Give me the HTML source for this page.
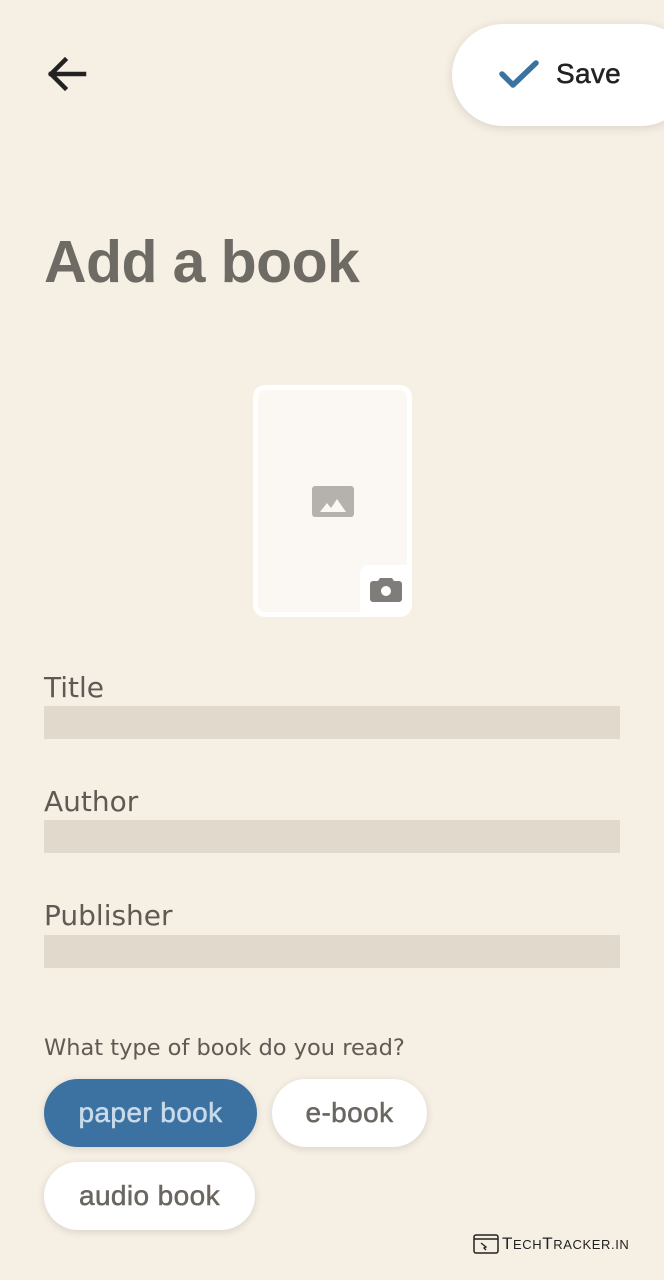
<!DOCTYPE html>
<html><head><meta charset="utf-8"><style>
*{margin:0;padding:0;box-sizing:border-box}
body{width:664px;height:1280px;background:#f6efe4;font-family:"Liberation Sans",sans-serif;position:relative;overflow:hidden}
.abs{position:absolute}
.save{left:452px;top:24px;width:240px;height:102px;background:#fff;border-radius:51px;box-shadow:0 2px 10px rgba(0,0,0,.12)}
.save span{position:absolute;left:104px;top:34px;font-size:28px;color:#222;letter-spacing:0.3px;-webkit-text-stroke:0.5px #222}
h1{position:absolute;left:44px;top:228px;font-size:59px;font-weight:bold;color:#6e6a64;letter-spacing:-0.6px}
.cover{left:253px;top:385px;width:159px;height:232px;background:#fbf7f2;border:5px solid #fff;border-radius:12px}
.lbl{position:absolute;left:44px;font-size:28px;color:#5f5a54;font-family:"DejaVu Sans",sans-serif}
.fld{position:absolute;left:44px;width:576px;height:33px;background:#e2d9cd}
.chip{position:absolute;height:68px;border-radius:34px;background:#fff;font-size:28px;color:#6a6660;text-align:center;line-height:68px;box-shadow:0 2px 8px rgba(0,0,0,.12);letter-spacing:0.4px;-webkit-text-stroke:0.5px currentColor}
</style></head><body>
<svg class="abs" style="left:44px;top:54px" width="44" height="40" viewBox="0 0 44 40"><path d="M40 20H7M21 6L7 20L21 34" fill="none" stroke="#222" stroke-width="4.5" stroke-linecap="square"/></svg>
<div class="abs save"><svg class="abs" style="left:46px;top:34px" width="42" height="32" viewBox="0 0 42 32"><path d="M4 16L15 27L38 5" fill="none" stroke="#3a72a0" stroke-width="5.5" stroke-linecap="round" stroke-linejoin="round"/></svg><span>Save</span></div>
<h1>Add a book</h1>
<div class="abs cover">
<svg class="abs" style="left:54px;top:96px" width="42" height="32" viewBox="0 0 42 32"><rect width="42" height="31" rx="3" fill="#b5b2ae"/><path d="M8 26L15 17L19 22L25 13L34 26Z" fill="#fbf7f2"/></svg>
<div class="abs" style="left:102px;top:175px;width:47px;height:47px;background:#fff;border-radius:8px 0 6px 0"></div>
<svg class="abs" style="left:112px;top:185px" width="32" height="28" viewBox="0 0 32 28"><path d="M10 3h12l2 3h5a3 3 0 0 1 3 3v15a3 3 0 0 1-3 3H3a3 3 0 0 1-3-3V9a3 3 0 0 1 3-3h5z" fill="#7f7d7a"/><circle cx="16" cy="16" r="5" fill="#fff"/></svg>
</div>
<div class="lbl" style="top:671px">Title</div><div class="fld" style="top:706px"></div>
<div class="lbl" style="top:785px">Author</div><div class="fld" style="top:820px"></div>
<div class="lbl" style="top:899px">Publisher</div><div class="fld" style="top:935px"></div>
<div class="lbl" style="top:1035px;font-size:22.5px">What type of book do you read?</div>
<div class="chip" style="left:44px;top:1079px;width:213px;background:#3c72a2;color:#c9dbea">paper book</div>
<div class="chip" style="left:272px;top:1079px;width:155px">e-book</div>
<div class="chip" style="left:44px;top:1162px;width:211px">audio book</div>
<svg class="abs" style="left:473px;top:1234px" width="26" height="20" viewBox="0 0 26 20"><rect x="1" y="1" width="24" height="18" rx="2" fill="none" stroke="#222" stroke-width="1.5"/><path d="M1 5H25" stroke="#222" stroke-width="1.5"/><path d="M8 9l5 4-2 1 2 2" fill="none" stroke="#222" stroke-width="1.3"/></svg>
<div class="abs" style="left:502px;top:1234px;font-size:17px;color:#222;letter-spacing:0.6px">T<span style="font-size:13px">ECH</span>T<span style="font-size:13px">RACKER.IN</span></div>
</body></html>
